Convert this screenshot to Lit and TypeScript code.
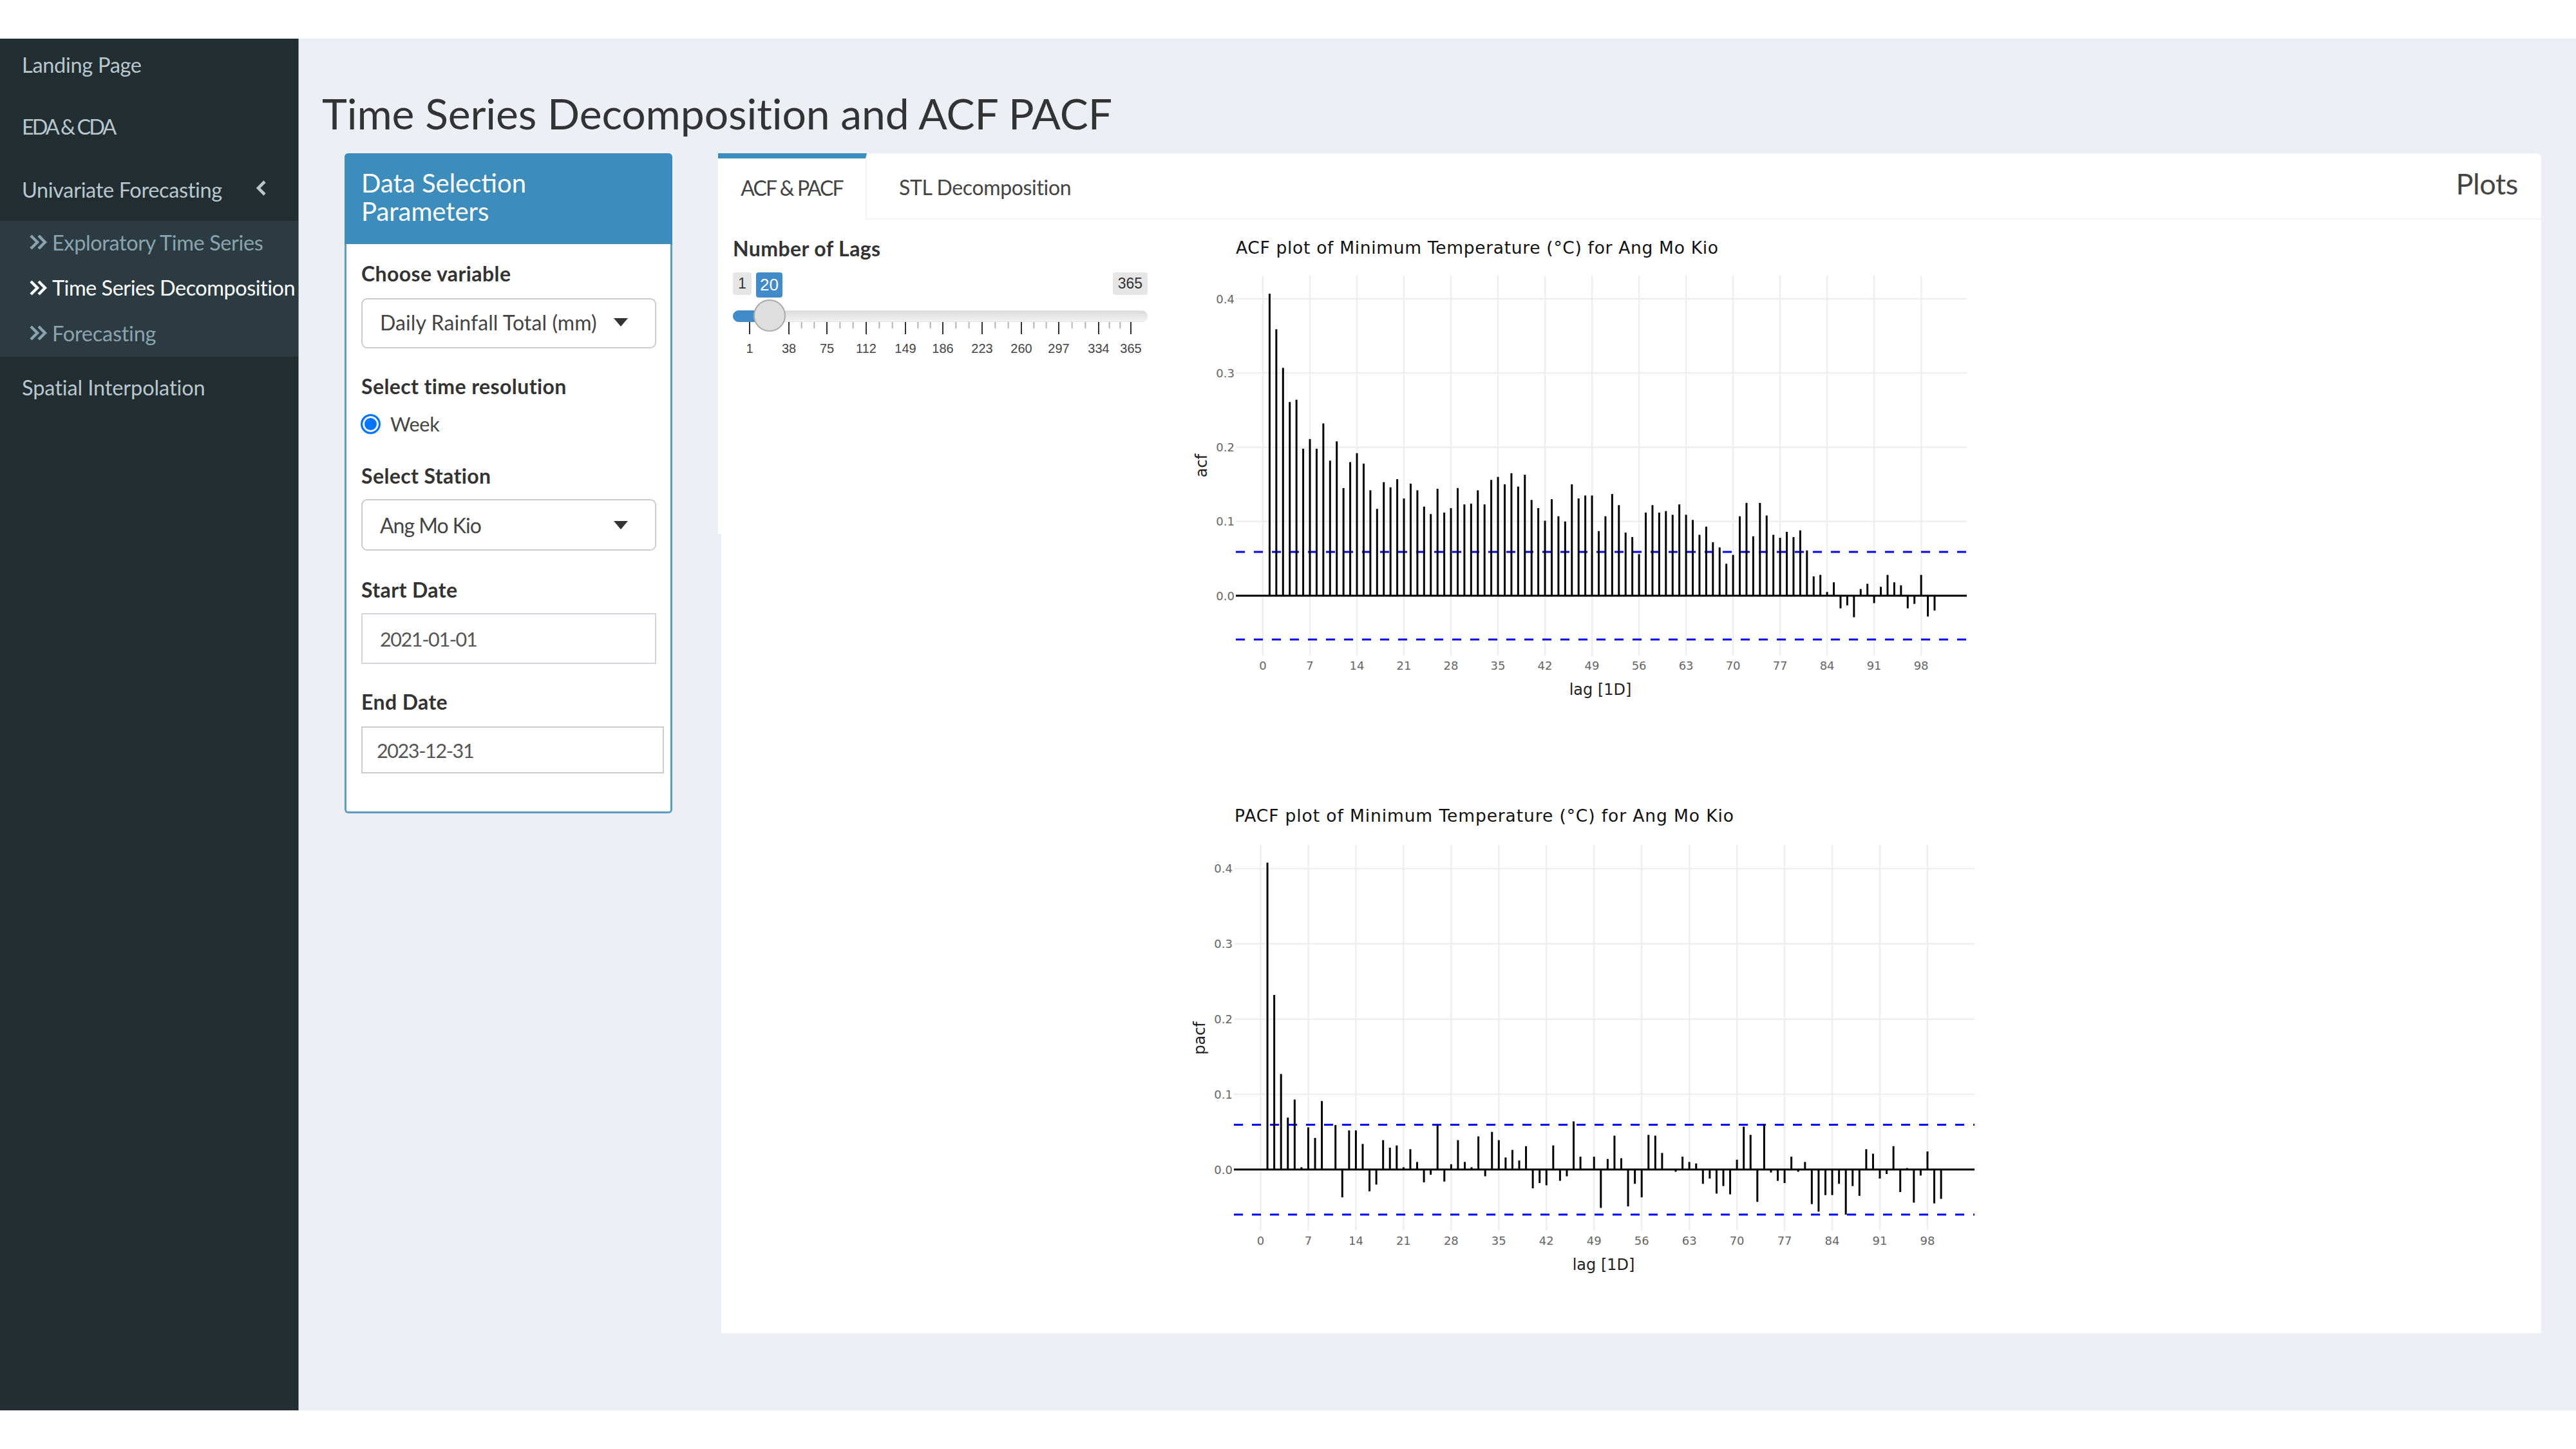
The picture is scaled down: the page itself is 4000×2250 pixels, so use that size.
import { LitElement, html, css, svg } from "lit";
import { customElement } from "lit/decorators.js";

const ACF = [.407,.359,.307,.261,.264,.198,.211,.198,.232,.182,.208,.145,.18,.192,.178,.142,.117,.153,.146,.157,.131,.151,.142,.12,.11,.144,.112,.118,.145,.123,.124,.142,.123,.156,.16,.15,.165,.147,.163,.129,.118,.101,.13,.107,.1,.15,.131,.135,.135,.087,.107,.137,.122,.085,.079,.056,.112,.122,.112,.114,.109,.123,.109,.102,.082,.093,.072,.065,.043,.055,.107,.125,.08,.125,.108,.082,.078,.086,.079,.088,.061,.026,.028,.005,.018,-.017,-.013,-.029,.009,.016,-.01,.012,.028,.018,.014,-.017,-.011,.028,-.028,-.02];
const PACF = [.408,.232,.127,.069,.093,.003,.056,.042,.091,0,.059,-.037,.052,.052,.034,-.029,-.02,.039,.029,.032,.003,.027,.01,-.017,-.007,.059,-.016,.007,.039,.01,.003,.044,-.009,.05,.039,.016,.026,.012,.031,-.025,-.018,-.021,.032,-.015,-.009,.064,.017,0,.017,-.051,.014,.045,.015,-.049,-.019,-.037,.046,.045,.022,0,-.003,.017,.01,.008,-.019,-.012,-.032,-.022,-.033,.013,.057,.046,-.043,.06,-.004,-.015,-.018,.017,-.003,.01,-.046,-.056,-.034,-.034,-.019,-.06,-.022,-.035,.027,.021,-.012,-.006,.031,-.03,.002,-.044,-.008,.024,-.045,-.039];

interface PlotCfg {
  vb: string; title: string; titleX: number; titleY: number; titleW: number;
  x0: number; dx: number; y0: number; dy: number; left: number; right: number; top: number; bottom: number;
  hi: number; lo: number; tickY: number; yTickX: number; xLabelX: number; xLabelY: number;
  yName: string; yNameX: number; yNameY: number; data: number[];
}

const PLOTS: PlotCfg[] = [
  { vb: "1850 341 1230 759", title: "ACF plot of Minimum Temperature (°C) for Ang Mo Kio", titleX: 1919, titleY: 384, titleW: 749,
    x0: 1961, dx: 10.43, y0: 925, dy: 1152.5, left: 1919, right: 3054, top: 428, bottom: 1018,
    hi: 857, lo: 993, tickY: 1033, yTickX: 1917, xLabelX: 2485, xLabelY: 1071, yName: "acf", yNameX: 1866, yNameY: 723, data: ACF },
  { vb: "1850 1240 1230 760", title: "PACF plot of Minimum Temperature (°C) for Ang Mo Kio", titleX: 1917, titleY: 1266, titleW: 775,
    x0: 1957.5, dx: 10.566, y0: 1816, dy: 1168, left: 1916, right: 3066, top: 1312, bottom: 1911,
    hi: 1746.5, lo: 1886, tickY: 1926, yTickX: 1914, xLabelX: 2490, xLabelY: 1964, yName: "pacf", yNameX: 1863, yNameY: 1612, data: PACF },
];

const XT = Array.from({ length: 15 }, (_, i) => i * 7);
const YT = [0, 0.1, 0.2, 0.3, 0.4];

const MAJOR = [26, 87, 146, 207, 268, 326, 387, 448, 506, 568, 618];
const MAJOR_LABEL = ["1", "38", "75", "112", "149", "186", "223", "260", "297", "334", "365"];

function plot(p: PlotCfg) {
  const X = (l: number) => p.x0 + p.dx * l;
  const Y = (v: number) => p.y0 - p.dy * v;
  return html`<svg class="plot" viewBox=${p.vb} preserveAspectRatio="none">
    ${XT.map((l) => svg`<line class="grid" x1=${X(l)} x2=${X(l)} y1=${p.top} y2=${p.bottom}></line>`)}
    ${YT.map((v) => svg`<line class="grid" x1=${p.left} x2=${p.right} y1=${Y(v)} y2=${Y(v)}></line>`)}
    <line class="dash" x1=${p.left} x2=${p.right} y1=${p.hi} y2=${p.hi}></line>
    <line class="dash" x1=${p.left} x2=${p.right} y1=${p.lo} y2=${p.lo}></line>
    <line class="stem" x1=${p.left} x2=${p.right} y1=${p.y0} y2=${p.y0}></line>
    ${p.data.map((v, i) => svg`<line class="stem" x1=${X(i + 1)} x2=${X(i + 1)} y1=${p.y0} y2=${Y(v)}></line>`)}
    ${XT.map((l) => svg`<text class="tick" text-anchor="middle" x=${X(l)} y=${p.tickY}>${l}</text>`)}
    ${YT.map((v) => svg`<text class="tick" text-anchor="end" x=${p.yTickX} y=${Y(v)}>${v.toFixed(1)}</text>`)}
    <text class="title" x=${p.titleX} y=${p.titleY} textLength=${p.titleW}>${p.title}</text>
    <text class="axis" text-anchor="middle" x=${p.xLabelX} y=${p.xLabelY}>lag [1D]</text>
    <text class="axis" text-anchor="middle" x=${p.yNameX} y=${p.yNameY} transform="rotate(-90 ${p.yNameX} ${p.yNameY})">${p.yName}</text>
  </svg>`;
}

function ticks() {
  const minors: number[] = [];
  for (let i = 1; i < MAJOR.length; i++) {
    const a = MAJOR[i - 1], b = MAJOR[i];
    minors.push(a + (b - a) / 3, a + (2 * (b - a)) / 3);
  }
  return html`<svg class="ticks" viewBox="0 0 644 60">
    ${minors.map((x) => svg`<line class="minor" x1=${x} x2=${x} y1="0" y2="10"></line>`)}
    ${MAJOR.map((x) => svg`<line class="major" x1=${x} x2=${x} y1="0" y2="19"></line>`)}
    ${MAJOR.map((x, i) => svg`<text class="tlabel" text-anchor="middle" x=${x} y="41">${MAJOR_LABEL[i]}</text>`)}
  </svg>`;
}

const dbl = html`<svg class="dbl" viewBox="0 0 28 24"><path d="M3 2l10 10L3 22M15 2l10 10-10 10"></path></svg>`;

@customElement("app-root")
export class AppRoot extends LitElement {
  static styles = css`
    :host { display: block; height: 2250px; background: #fff; font-family: "Lato", "Noto Sans", sans-serif; padding: 60px 0; box-sizing: border-box; }
    .page { display: flex; height: 2130px; }
    .side { flex: 0 0 463px; background: #222d32; border-right: 1px solid #76858a; }
    .nav { display: grid; grid-template-rows: 84px 106px 93px 211px 98px; }
    .item { display: flex; align-items: center; justify-content: space-between; padding: 0 49px 4px 34px; box-sizing: border-box; color: #b8c7ce; font-size: 32.5px; white-space: nowrap; }
    .ls-land { letter-spacing: -0.3px; }
    .ls-eda { letter-spacing: -3px; padding-bottom: 2px; }
    .ls-uni { letter-spacing: -0.35px; }
    .ls-spa { letter-spacing: -0.1px; }
    .sub { background: #2c3b41; display: grid; grid-template-rows: 70px 71px 70px; }
    .subitem { display: flex; align-items: center; gap: 8px; padding: 0 0 4px 45px; box-sizing: border-box; color: #8aa4af; font-size: 32.5px; letter-spacing: -0.4px; white-space: nowrap; }
    .subitem.on { color: #fff; letter-spacing: -0.5px; }
    .subitem.fc { letter-spacing: -0.25px; }
    .dbl { width: 28px; height: 24px; fill: none; stroke: currentColor; stroke-width: 4.4; }
    .chev { width: 18px; height: 26px; margin-top: -6px; fill: none; stroke: currentColor; stroke-width: 4.6; }
    .main { flex: 1; background: #ecf0f5; display: flex; flex-direction: column; min-width: 0; }
    h1 { margin: 76px 0 22px 36px; font-size: 66px; line-height: 80px; font-weight: 400; color: #333; letter-spacing: -0.1px; white-space: nowrap; }
    .row { display: flex; align-items: flex-start; padding-left: 71px; gap: 71px; }
    .box { flex: 0 0 509px; box-sizing: border-box; height: 1025px; background: #fff; border: 3px solid #5b9dc6; border-top: 0; border-radius: 6px; display: flex; flex-direction: column; }
    .box-h { background: #3c8dbc; color: #fff; margin: 0 -3px; height: 141px; box-sizing: border-box; padding: 24px 26px 0; font-size: 40px; line-height: 44px; border-radius: 6px 6px 0 0; }
    .box-b { padding: 27px 0 0 23px; display: flex; flex-direction: column; }
    .lab { height: 40px; line-height: 38px; font-size: 32px; font-weight: 700; color: #333; letter-spacing: 0.4px; margin-bottom: 17px; white-space: nowrap; }
    .lab.low { line-height: 41px; }
    .field { margin-bottom: 40px; }
    .sel { width: 458px; height: 78px; box-sizing: border-box; border: 2px solid #ccc; border-radius: 9px; display: flex; align-items: center; justify-content: space-between; padding: 0 42px 4px 27px; font-size: 32px; letter-spacing: 0.1px; color: #444; background: #fff; }
    .sel.tall { height: 80px; padding-bottom: 0; letter-spacing: -1px; }
    .caret { width: 0; height: 0; border-left: 11px solid transparent; border-right: 11px solid transparent; border-top: 13px solid #333; }
    .radio { display: flex; align-items: center; height: 40px; gap: 15px; font-size: 30.5px; color: #444; letter-spacing: -0.3px; margin-top: 2px; }
    .dot { width: 31px; height: 31px; box-sizing: border-box; border-radius: 50%; border: 3px solid #0075ff; background: #0075ff; box-shadow: inset 0 0 0 3px #fff; margin-left: -1px; }
    .inp { width: 458px; height: 79px; box-sizing: border-box; border: 2px solid #d2d6de; display: flex; align-items: center; padding-left: 27px; font-size: 30.5px; letter-spacing: -1.4px; color: #555; background: #fff; }
    .inp.end { width: 470px; height: 73px; padding-left: 22px; border-color: #ccc; }
    .card { position: relative; flex: 0 0 2831px; height: 1832px; background: #fff; border-radius: 8px 8px 0 0; display: flex; flex-direction: column; }
    .card::after { content: ""; position: absolute; left: 0; top: 591px; bottom: 0; width: 5px; background: #ecf0f5; }
    .tabs { display: flex; align-items: stretch; height: 103px; box-sizing: border-box; border-bottom: 2px solid #f4f4f4; font-size: 32px; color: #444; letter-spacing: -0.35px; }
    .tab { display: flex; align-items: center; padding: 8px 0 4px; box-sizing: border-box; }
    .tab.on { width: 231px; justify-content: center; border-top: 8px solid #3c8dbc; padding-top: 0; border-right: 2px solid #f4f4f4; margin-bottom: -2px; background: #fff; letter-spacing: -1.85px; }
    .tab.off { padding-left: 50px; }
    .plots-t { margin-left: auto; padding-right: 36px; display: flex; align-items: center; font-size: 45px; color: #444; height: 94px; }
    .pane { display: flex; gap: 68px; padding-left: 23px; }
    .ctl { flex: 0 0 644px; padding-top: 26px; }
    .ctl .lab { margin-bottom: 16px; }
    .slider { position: relative; }
    .ends { display: flex; justify-content: space-between; height: 35px; }
    .tag { background: #e6e6e6; color: #333; border-radius: 4px; font: 23px/35px "Liberation Sans", Arial, sans-serif; padding: 0 8px; }
    .tag.val { position: absolute; top: 0; left: 36px; height: 39px; width: 41px; box-sizing: border-box; padding: 0; text-align: center; font-size: 26px; line-height: 39px; background: #428bca; color: #fff; }
    .track { position: relative; margin-top: 24px; height: 18px; box-sizing: border-box; background: linear-gradient(#dcdcdc, #f2f2f2); border: 1px solid #e2e2e2; border-radius: 9px; }
    .fill { width: 57px; height: 18px; margin: -1px 0 0 -1px; background: #428bca; border-radius: 9px 0 0 9px; }
    .handle { position: absolute; left: 31px; top: -18px; width: 50px; height: 50px; box-sizing: border-box; border-radius: 50%; background: #dedede; border: 2px solid #ababab; }
    .ticks { display: block; width: 644px; height: 60px; }
    .minor { stroke: #b5b5b5; stroke-width: 2; }
    .major { stroke: #333; stroke-width: 2; }
    .tlabel { font: 20px "Liberation Sans", Arial, sans-serif; fill: #444; dominant-baseline: central; }
    .plotcol { display: flex; flex-direction: column; gap: 140px; }
    .plot { display: block; width: 1230px; }
    .plot:first-child { height: 759px; }
    .plot:last-child { height: 760px; }
    .grid { stroke: #efefef; stroke-width: 2.5; }
    .dash { stroke: #0000ff; stroke-width: 3; stroke-dasharray: 14 14; }
    .stem { stroke: #000; stroke-width: 3; }
    .tick { font: 18px "DejaVu Sans", Verdana, sans-serif; fill: #666; dominant-baseline: central; }
    .title { font: 26.5px "DejaVu Sans", Verdana, sans-serif; fill: #111; dominant-baseline: central; }
    .axis { font: 24px "DejaVu Sans", Verdana, sans-serif; fill: #222; dominant-baseline: central; }
  `;

  render() {
    return html`<div class="page">
      <aside class="side">
        <nav class="nav">
          <div class="item ls-land">Landing Page</div>
          <div class="item ls-eda">EDA &amp; CDA</div>
          <div class="item ls-uni">Univariate Forecasting
            <svg class="chev" viewBox="0 0 18 26"><path d="M15 3L5 13l10 10"></path></svg>
          </div>
          <div class="sub">
            <div class="subitem">${dbl}Exploratory Time Series</div>
            <div class="subitem on">${dbl}Time Series Decomposition</div>
            <div class="subitem fc">${dbl}Forecasting</div>
          </div>
          <div class="item ls-spa">Spatial Interpolation</div>
        </nav>
      </aside>
      <main class="main">
        <h1>Time Series Decomposition and ACF PACF</h1>
        <div class="row">
          <section class="box">
            <div class="box-h">Data Selection<br />Parameters</div>
            <div class="box-b">
              <div class="field">
                <div class="lab">Choose variable</div>
                <div class="sel">Daily Rainfall Total (mm)<span class="caret"></span></div>
              </div>
              <div class="field">
                <div class="lab">Select time resolution</div>
                <div class="radio"><span class="dot"></span>Week</div>
              </div>
              <div class="field">
                <div class="lab low">Select Station</div>
                <div class="sel tall">Ang Mo Kio<span class="caret"></span></div>
              </div>
              <div class="field">
                <div class="lab low">Start Date</div>
                <div class="inp">2021-01-01</div>
              </div>
              <div class="field">
                <div class="lab">End Date</div>
                <div class="inp end">2023-12-31</div>
              </div>
            </div>
          </section>
          <section class="card">
            <div class="tabs">
              <div class="tab on">ACF &amp; PACF</div>
              <div class="tab off">STL Decomposition</div>
              <div class="plots-t">Plots</div>
            </div>
            <div class="pane">
              <div class="ctl">
                <div class="lab">Number of Lags</div>
                <div class="slider">
                  <div class="ends"><span class="tag">1</span><span class="tag">365</span></div>
                  <span class="tag val">20</span>
                  <div class="track"><div class="fill"></div><div class="handle"></div></div>
                  ${ticks()}
                </div>
              </div>
              <div class="plotcol">${PLOTS.map(plot)}</div>
            </div>
          </section>
        </div>
      </main>
    </div>`;
  }
}
